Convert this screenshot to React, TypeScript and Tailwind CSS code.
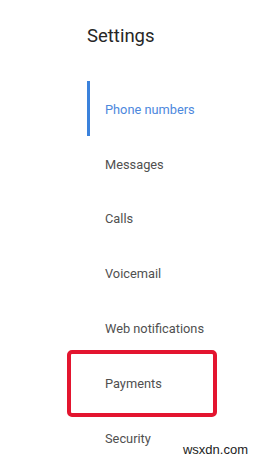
const items = [
  'Phone numbers',
  'Messages',
  'Calls',
  'Voicemail',
  'Web notifications',
  'Payments',
  'Security',
];

export default function App() {
  return (
    <div className="relative w-[260px] h-[462px] overflow-hidden bg-white font-['Roboto',sans-serif]">
      <div className="pl-[87px] pt-[24px]">
        <h1 className="text-[18.5px] leading-[24px] text-[#262626]">Settings</h1>
      </div>

      <nav className="mt-[33px] flex flex-col">
        {items.map((item, i) => {
          const active = i === 0;
          const boxed = item === 'Payments';
          return (
            <div key={item} className="relative h-[54.8px] flex items-center pt-[2px]">
              {active && <div className="absolute left-[87px] top-0 h-[55px] w-[3px] bg-[#3b82dc]" />}
              {boxed && (
                <div className="absolute left-[67px] top-[-5px] w-[150px] h-[67px] border-[4px] border-[#e3152f] rounded-[5px]" />
              )}
              <span
                className={
                  'pl-[105px] text-[12.8px] ' + (active ? 'text-[#4d88dd]' : 'text-[#505050]')
                }
              >
                {item}
              </span>
            </div>
          );
        })}
      </nav>

      {/* watermark */}
      <div className="absolute right-[12px] bottom-[3px] text-[13px] text-[#222] font-['Liberation_Sans',sans-serif]">
        wsxdn.com
      </div>
    </div>
  );
}
